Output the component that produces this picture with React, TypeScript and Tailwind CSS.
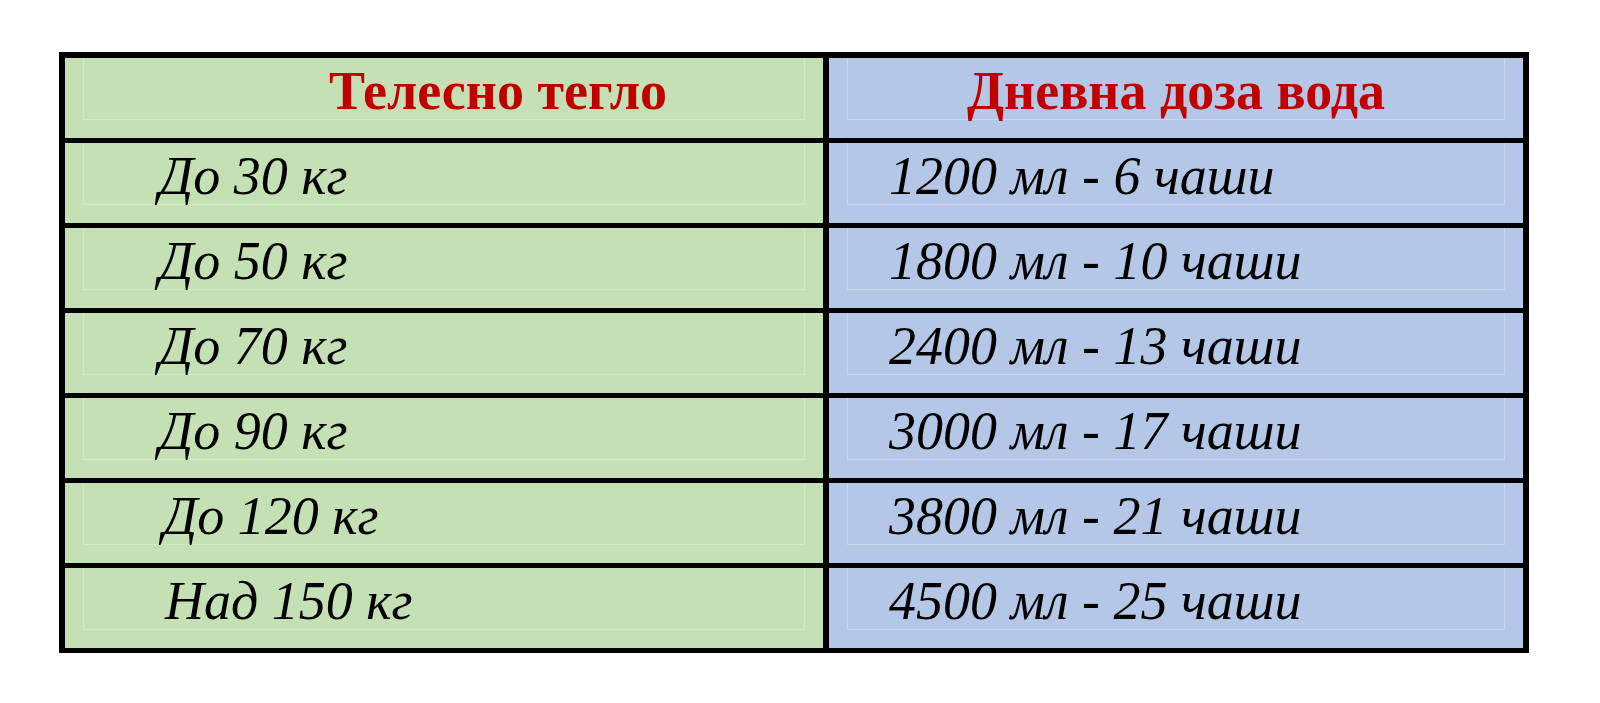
import React from "react";

const rows = [
  { weight: "До 30 кг", dose: "1200 мл - 6 чаши", indent: "pl-[75px]" },
  { weight: "До 50 кг", dose: "1800 мл - 10 чаши", indent: "pl-[75px]" },
  { weight: "До 70 кг", dose: "2400 мл - 13 чаши", indent: "pl-[75px]" },
  { weight: "До 90 кг", dose: "3000 мл - 17 чаши", indent: "pl-[75px]" },
  { weight: "До 120 кг", dose: "3800 мл - 21 чаши", indent: "pl-[79px]" },
  { weight: "Над 150 кг", dose: "4500 мл - 25 чаши", indent: "pl-[81px]" },
];

const serif = { fontFamily: '"Liberation Serif", "Times New Roman", serif' };

const Cell = ({
  tone,
  children,
  className = "",
}: {
  tone: "green" | "blue";
  children: React.ReactNode;
  className?: string;
}) => (
  <div
    className={`flex h-[80px] px-[18px] pb-[18px] ${
      tone === "green" ? "bg-[#c5e0b4]" : "bg-[#b4c7e7]"
    }`}
  >
    <div
      className={`flex flex-1 items-center border-x border-b border-white/25 pt-[5px] ${className}`}
    >
      {children}
    </div>
  </div>
);

export default function App() {
  return (
    <div className="min-h-screen bg-white pt-[52px] pl-[59px]" style={serif}>
      <div className="grid w-[1470px] grid-cols-[758px_694px] gap-x-[6px] gap-y-[5px] bg-black p-[6px] pb-[5px]">
        <Cell tone="green" className="justify-center pl-[108px]">
          <span className="text-[54px] font-bold leading-none text-[#c00000] whitespace-nowrap">
            Телесно тегло
          </span>
        </Cell>
        <Cell tone="blue" className="justify-center">
          <span className="text-[54px] font-bold leading-none text-[#c00000] whitespace-nowrap">
            Дневна доза вода
          </span>
        </Cell>
        {rows.map((r) => (
          <React.Fragment key={r.weight}>
            <Cell tone="green" className={r.indent}>
              <span className="text-[54px] italic leading-none text-black whitespace-nowrap">
                {r.weight}
              </span>
            </Cell>
            <Cell tone="blue" className="pl-[41px]">
              <span className="text-[54px] italic leading-none text-black whitespace-nowrap">
                {r.dose}
              </span>
            </Cell>
          </React.Fragment>
        ))}
      </div>
    </div>
  );
}
